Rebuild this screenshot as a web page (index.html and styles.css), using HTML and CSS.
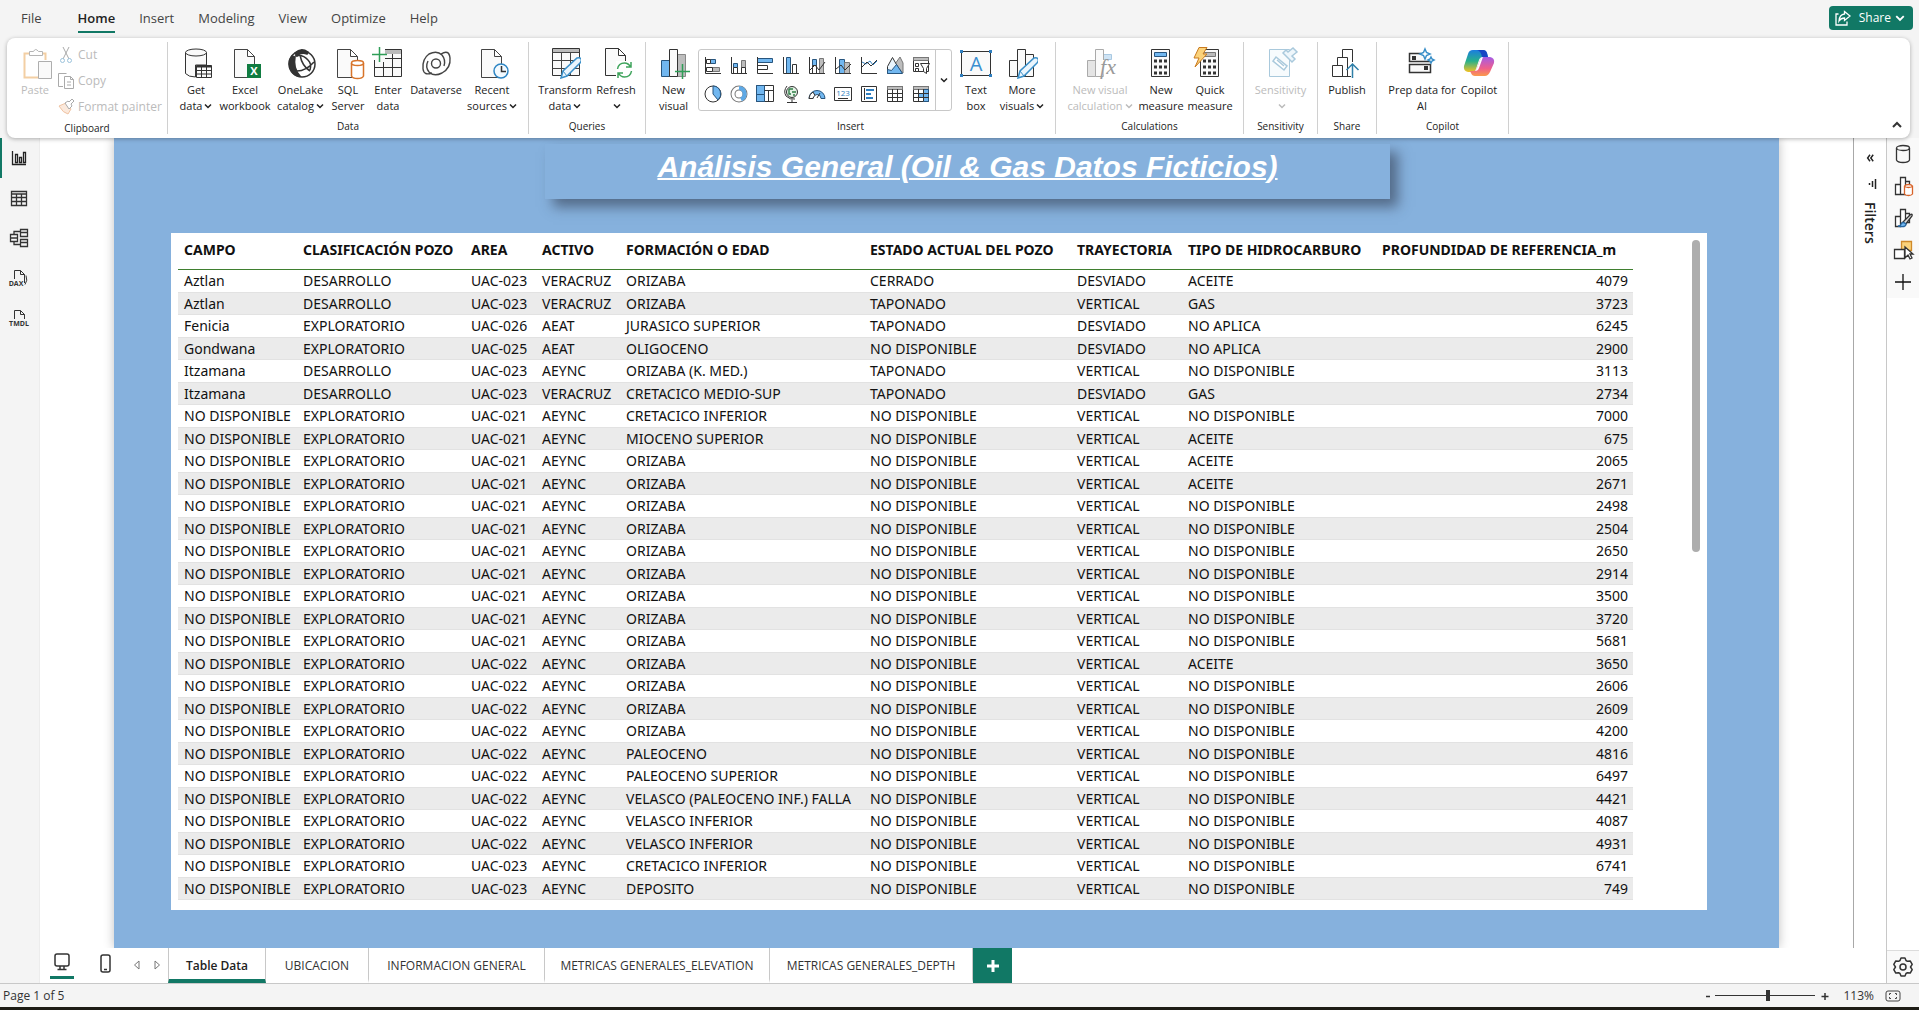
FILE: index.html
```html
<!DOCTYPE html>
<html lang="en">
<head>
<meta charset="utf-8">
<title>Report editor</title>
<link rel="stylesheet" href="styles.css">
</head>
<body>
<svg class="defs" aria-hidden="true">
  <symbol id="chev" viewBox="0 0 8 8"><path d="M1 2.500l3 3 3-3" fill="none" stroke="currentColor" stroke-width="1.500"/></symbol>
  <symbol id="doc" viewBox="0 0 32 32"><path d="M5.500 2.500h13l7 7v21h-20zM18.500 2.500v7h7" fill="#fafafa" stroke="#444"/></symbol>
  <symbol id="pencil" viewBox="0 0 32 32"><path d="M12 31l2-7 14-13q3-1 4 1t-1 4l-13 13z" fill="#eaf5fd" stroke="#3a8fc8" stroke-width="1.500"/><path d="M14 24l4 5" stroke="#3a8fc8"/></symbol>
</svg>

<header class="topbar">
  <nav class="menu">
    <a href="#">File</a><a href="#" class="active">Home</a><a href="#">Insert</a><a href="#">Modeling</a><a href="#">View</a><a href="#">Optimize</a><a href="#">Help</a>
  </nav>
  <button class="share"><svg width="16" height="16" viewBox="0 0 16 16" fill="none" stroke="#fff" stroke-width="1.300"><path d="M3.500 4H1v11h11v-3.500"/><path d="M9.500 1.500L15 6l-5.500 4.500V8Q6 8 4 11q.5-6.500 5.500-7z"/></svg>Share<svg width="10" height="10"><use href="#chev"/></svg></button>
</header>

<section class="ribbon">
  <div class="group clipboard">
    <div class="tools">
      <button class="tool" disabled><svg class="ico" viewBox="0 0 32 32" fill="none"><path d="M14 6.500H5.500v24H19M22 6.500h4.500V13" stroke="#f3cfa4" stroke-width="2"/><path d="M10.500 8.500v-4h4q2-4 5 0h4v4z" fill="#fff" stroke="#b5b5b5"/><path d="M19.500 14.500h13v17h-13z" fill="#fafafa" stroke="#aeaeae"/></svg><span>Paste</span></button>
      <div class="stack">
        <button disabled><svg width="18" height="18" viewBox="0 0 18 18" fill="none" stroke="#aaa"><path d="M6 1l6 12M12 1L6 13"/><circle cx="5.500" cy="14.500" r="2" stroke="#9cc3dc"/><circle cx="12.500" cy="14.500" r="2" stroke="#9cc3dc"/></svg>Cut</button>
        <button disabled><svg width="18" height="18" viewBox="0 0 18 18" fill="#fff" stroke="#aaa"><path d="M6 14.500H1.500v-13h8"/><path d="M7.500 4.500h6l3 3v9h-9zM13.500 4.500v3h3M10 10h4M10 13h4"/></svg>Copy</button>
        <button disabled><svg width="18" height="18" viewBox="0 0 18 18" fill="none" stroke="#aaa"><path d="M2 8l7-3 5 6-3 5q-5-1-9-8z" stroke="#f0c4a4" fill="#fbe9dc"/><path d="M8 5l3-2 1 1 3-3 2 2-3 3 1 2-3 3z" fill="#fff"/></svg>Format painter</button>
      </div>
    </div>
    <h2>Clipboard</h2>
  </div>

  <div class="group data">
    <div class="tools">
      <button class="tool"><svg class="ico" viewBox="0 0 32 32" fill="#fafafa" stroke="#333"><path d="M5.500 5.500v21q3 3.500 10 3.500V18h11V5.500"/><ellipse cx="16" cy="5.500" rx="10.500" ry="3.500"/><path d="M16.500 18.500h15v12h-15z"/><path d="M16.500 19.500h15" stroke-width="2"/><path d="M16.500 23.500h15M16.500 27h15M21.500 19v12M26.500 19v12"/></svg><span>Get<br>data<svg class="chev"><use href="#chev"/></svg></span></button>
      <button class="tool"><svg class="ico" viewBox="0 0 32 32"><use href="#doc"/><path d="M18 17h14v14H18z" fill="#107c41"/><text x="25" y="28" class="xl">X</text></svg><span>Excel<br>workbook</span></button>
      <button class="tool"><svg class="ico" viewBox="0 0 32 32" fill="none" stroke="#333" stroke-width="1.500"><circle cx="17" cy="17" r="13" fill="#fff"/><path d="M7 9q-6 8 1 17 3 3 7 3Q8 21 10 10z" fill="#333"/><path d="M10 6q6-6 13-1l-1 2q-6-2-10 2z" fill="#333"/><path d="M10 9q8-2 13 4 4 4 2 10M12 24q9 0 17-9M15 8q2 11 10 16"/></svg><span>OneLake<br>catalog<svg class="chev"><use href="#chev"/></svg></span></button>
      <button class="tool"><svg class="ico" viewBox="0 0 32 32"><use href="#doc"/><g fill="#fff" stroke="#d8742a" stroke-width="1.500"><path d="M19.500 16v13q1 2.500 6 2.500t6-2.500V16"/><ellipse cx="25.500" cy="16" rx="6" ry="2.500"/></g></svg><span>SQL<br>Server</span></button>
      <button class="tool"><svg class="ico" viewBox="0 0 32 32" fill="none" stroke="#333"><path d="M2.500 13v16.500h27v-27H13" fill="#fafafa"/><path d="M13 3h16v4H13z" fill="#bbb" stroke="none"/><path d="M2.500 20.500h27M13 11.500h16.500M11.500 15v14.500M20.500 7v22.500"/><path d="M7.500 0v15M0 7.500h15" stroke="#2f9e57" stroke-width="1.500"/></svg><span>Enter<br>data</span></button>
      <button class="tool"><svg class="ico" viewBox="0 0 32 32" fill="none" stroke="#444" stroke-width="1.400"><path d="M12 26Q4 29 3 22 2 12 9 7q8-4 13 1 4 5 2 11"/><path d="M21 7q8-5 9 4 1 10-8 15-8 4-13-1-4-5-1-11"/><circle cx="16" cy="16.500" r="4.500"/></svg><span>Dataverse</span></button>
      <button class="tool"><svg class="ico" viewBox="0 0 32 32"><use href="#doc"/><circle cx="25" cy="24" r="7" fill="#f3faff" stroke="#2f86c4" stroke-width="1.500"/><path d="M25.500 19v5.500H30" fill="none" stroke="#333" stroke-width="1.500"/></svg><span>Recent<br>sources<svg class="chev"><use href="#chev"/></svg></span></button>
    </div>
    <h2>Data</h2>
  </div>

  <div class="group queries">
    <div class="tools">
      <button class="tool"><svg class="ico" viewBox="0 0 32 32"><path d="M3.500 1.500h27v27h-27z" fill="#fafafa" stroke="#333"/><path d="M4 2h26v3H4z" fill="#bbb"/><path d="M3.500 5.500h27M3.500 13.500h27M3.500 21.500h27M12.500 5v23M21.500 5v23" stroke="#444" fill="none"/><use href="#pencil"/></svg><span>Transform<br>data<svg class="chev"><use href="#chev"/></svg></span></button>
      <button class="tool"><svg class="ico" viewBox="0 0 32 32"><path d="M5.500 1.500h13l7 7v20h-20zM18.500 1.500v7h7" fill="#fafafa" stroke="#333"/><path d="M16 14h16v17H16z" fill="#fff"/><path d="M17.500 22q1-6 7-6 4 0 6 4M31 15v5h-5M31.500 24q-1 6-7 6-4 0-6-4M18 31v-5h5" fill="none" stroke="#3fa45c" stroke-width="1.500"/></svg><span>Refresh<br><svg class="chev"><use href="#chev"/></svg></span></button>
    </div>
    <h2>Queries</h2>
  </div>

  <div class="group insert">
    <div class="tools">
      <button class="tool"><svg class="ico" viewBox="0 0 32 32"><path d="M3.500 13.500h8v16h-8z" fill="#71b7f0" stroke="#27557e"/><path d="M19.500 7.500h8v22h-8z" fill="#bdbdbd" stroke="#888"/><path d="M11.500 2.500h8v27h-8z" fill="#fafafa" stroke="#333"/><path d="M24.500 17v15M17 24.500h15" stroke="#2f9e57" stroke-width="1.500"/></svg><span>New<br>visual</span></button>
      <div class="gallery">
        <div class="visuals">
          <button aria-label="Stacked bar chart"><svg viewBox="0 0 18 18"><path class="b" d="M6.500 3.500h5v4h-5z"/><path class="w" d="M2.500 3.500h4v4h-4z"/><path class="g" d="M8.500 11.500h7v4h-7z"/><path class="w" d="M2.500 11.500h6v4h-6z"/><path class="l" d="M1.500 1v16.500H17"/></svg></button>
          <button aria-label="Stacked column chart"><svg viewBox="0 0 18 18"><path class="b" d="M3.500 7.500h4v4h-4z"/><path class="w" d="M3.500 11.500h4v6h-4z"/><path class="g" d="M11.500 4.500h4v7h-4z"/><path class="w" d="M11.500 11.500h4v6h-4z"/><path class="l" d="M1.500 1v16.500H17"/></svg></button>
          <button aria-label="Clustered bar chart"><svg viewBox="0 0 18 18"><path class="b" d="M1.500 2.500h15v4h-15z"/><path class="w" d="M1.500 9.500h10v4h-10z"/><path class="l" d="M1.500 1v16.500H17"/></svg></button>
          <button aria-label="Clustered column chart"><svg viewBox="0 0 18 18"><path class="b" d="M4.500 1.500h4v16h-4z"/><path class="w" d="M10.500 8.500h4v9h-4z"/><path class="l" d="M1.500 1v16.500H17"/></svg></button>
          <button aria-label="Line and stacked column chart"><svg viewBox="0 0 18 18"><path class="b" d="M4.500 3.500h4v6h-4z"/><path class="w" d="M4.500 9.500h4v8h-4z"/><path class="g" d="M11.500 2.500h4v15h-4z"/><path class="l" d="M1.500 1v16.500H17M2 14l5-5 4 5 6-8"/></svg></button>
          <button aria-label="Line and clustered column chart"><svg viewBox="0 0 18 18"><path class="b" d="M5.500 3.500h5v14h-5z"/><path class="g" d="M10.500 6.500h5v11h-5z"/><path class="l" d="M1.500 1v16.500H17M2 13l5-4 4 5 6-6"/></svg></button>
          <button aria-label="Line chart"><svg viewBox="0 0 18 18"><path d="M2 6l4 2 4-3 3 4 4-4" fill="none" stroke="#2f7fc0"/><path class="l" d="M1.500 1v16.500H17M2 11l5-5 4 4 6-6"/></svg></button>
          <button aria-label="Area chart"><svg viewBox="0 0 18 18"><path d="M9 8l5-7 3 6v10z" fill="#bdbdbd" stroke="#777"/><path d="M1.500 17.500v-7l5-9 9 16z" fill="#eaf5fd" stroke="#333"/><path d="M1.500 17.500v-4l4 1 5-6 6 9z" class="b"/></svg></button>
          <button aria-label="Slicer"><svg viewBox="0 0 18 18"><path class="w" d="M1.500 1.500h15v14h-15z"/><path class="g" d="M1.500 1.500h15v3h-15z"/><path class="w" d="M3.500 7.500h3v3h-3zM3.500 12.500h3v3h-3zM8.500 7.500h9l-3 5v5l-3-2v-3z"/></svg></button>
          <button aria-label="Pie chart"><svg viewBox="0 0 18 18"><circle class="w" cx="9" cy="9" r="8"/><path class="b" d="M9 1a8 8 0 0 1 5 14L9 9z"/></svg></button>
          <button aria-label="Donut chart"><svg viewBox="0 0 18 18"><circle cx="9" cy="9" r="6" fill="none" stroke="#777" stroke-width="5"/><circle cx="9" cy="9" r="6" fill="none" stroke="#fff" stroke-width="3"/><path d="M9 3a6 6 0 0 1 2 11.500" fill="none" stroke="#5ea9e6" stroke-width="4"/></svg></button>
          <button aria-label="Treemap"><svg viewBox="0 0 18 18"><path class="w" d="M.500 .500h17v16H.500z"/><path class="b" d="M.500 .500h8v9h-8zM.500 9.500h8v7h-8z"/><path class="l" d="M8.500 5.500h9M12.500 5.500v11"/></svg></button>
          <button aria-label="Map"><svg viewBox="0 0 18 18"><circle cx="10" cy="7" r="5.500" fill="#e4f2e6" stroke="#333"/><path d="M7 4h4M7 4v5h2M10 7h4M11 10h2" fill="none" stroke="#2e7d46" stroke-width="1.400"/><path class="l" d="M5 1Q1 6 4 11q4 4 9 3M10 14.500v3M5 17.500h10"/></svg></button>
          <button aria-label="Gauge"><svg viewBox="0 0 18 18"><path d="M1 13.500a8 8 0 0 1 16 0h-4a4 4 0 0 0-8 0z" fill="#71b7f0" stroke="#27557e"/><path d="M1 13.500A8 8 0 0 1 5 7l2 3.500a4 4 0 0 0-2 3z" fill="#fff" stroke="#333"/><path class="l" d="M9 13l3-5"/></svg></button>
          <button aria-label="Card"><svg viewBox="0 0 18 18"><path class="w" d="M.500 2.500h17v13H.500z"/><text x="9" y="11" class="num">123</text><path class="l" d="M4 13.500h10"/></svg></button>
          <button aria-label="Multi-row card"><svg viewBox="0 0 18 18"><path class="w" d="M1.500 1.500h15v15h-15z"/><path d="M4.500 3v12" stroke="#333"/><path d="M6 5h8M6 9h5M6 13h7" stroke="#2f7fc0" stroke-width="2"/></svg></button>
          <button aria-label="Table"><svg viewBox="0 0 18 18"><path class="w" d="M1.500 1.500h15v15h-15z"/><path class="g" d="M1.500 1.500h15v3h-15z"/><path class="l" d="M1 8.500h16M1 12.500h16M6.500 4v12M11.500 4v12"/></svg></button>
          <button aria-label="Matrix"><svg viewBox="0 0 18 18"><path class="w" d="M1.500 1.500h15v15h-15z"/><path class="g" d="M1.500 1.500h15v3h-15z"/><path class="b" d="M11.500 4.500h5v12h-5zM6.500 8.500h5v4h-5z"/><path class="l" d="M1 8.500h16M1 12.500h16M6.500 4v12M11.500 4v12"/></svg></button>
        </div>
        <button class="more" aria-label="More visuals"><svg class="chev"><use href="#chev"/></svg></button>
      </div>
      <button class="tool"><svg class="ico" viewBox="0 0 32 32"><path d="M1.500 4.500h29v24h-29z" fill="#fafafa" stroke="#333"/><path d="M0 3h3v3H0zM29 3h3v3h-3zM0 27h3v3H0zM29 27h3v3h-3z" fill="#2f7fc0"/><text x="16" y="24" class="big">A</text></svg><span>Text<br>box</span></button>
      <button class="tool"><svg class="ico" viewBox="0 0 32 32"><path d="M3.500 13.500h8v16h-8zM19.500 7.500h8v22h-8zM11.500 2.500h8v27h-8z" fill="#fafafa" stroke="#333"/><use href="#pencil"/></svg><span>More<br>visuals<svg class="chev"><use href="#chev"/></svg></span></button>
    </div>
    <h2>Insert</h2>
  </div>

  <div class="group calc">
    <div class="tools">
      <button class="tool" disabled><svg class="ico" viewBox="0 0 32 32"><path d="M3.500 13.500h8v16h-8z" fill="#e4e4e4" stroke="#aaa"/><path d="M19.500 7.500h8v5h-8z" fill="#cfe4f5" stroke="#a9c9e2"/><path d="M11.500 2.500h8v27h-8z" fill="#fafafa" stroke="#aaa"/><path d="M18 13h14v18H20z" fill="#fff"/><text x="24" y="27" class="fx">fx</text></svg><span>New visual<br>calculation<svg class="chev"><use href="#chev"/></svg></span></button>
      <button class="tool"><svg class="ico" viewBox="0 0 32 32"><path d="M6.500 2.500h18v27h-18z" fill="#fafafa" stroke="#333"/><path d="M9.500 5.500h12v4h-12z" fill="#71b7f0" stroke="#27557e"/><path d="M9 14h14M9 20h14M9 26h14" stroke="#333" stroke-width="3" stroke-dasharray="3 2"/></svg><span>New<br>measure</span></button>
      <button class="tool"><svg class="ico" viewBox="0 0 32 32"><path d="M6.500 2.500h18v27h-18z" fill="#fafafa" stroke="#333"/><path d="M9.500 5.500h12v4h-12z" fill="#bbb" stroke="#777"/><path d="M9 14h14M9 20h14M9 26h14" stroke="#333" stroke-width="3" stroke-dasharray="3 2"/><path d="M5 .500h8L9 7h4L1 20l4-9H0z" fill="#fbd27a" stroke="#c97a1e"/></svg><span>Quick<br>measure</span></button>
    </div>
    <h2>Calculations</h2>
  </div>

  <div class="group sens">
    <div class="tools">
      <button class="tool" disabled><svg class="ico" viewBox="0 0 32 32" stroke="#a9c9dc"><path d="M4.500 2.500h20v27h-20z" fill="#f7fbfd"/><path d="M11 10l11 9-3 4-11-9zM12 13l7 6" fill="#fff" stroke-width="1.500"/><path d="M18 6l9 9 3-3-3-3 5-4-4-4-5 4-2-2z" fill="#eef6fb" stroke-width="1.500"/></svg><span>Sensitivity<br><svg class="chev"><use href="#chev"/></svg></span></button>
    </div>
    <h2>Sensitivity</h2>
  </div>

  <div class="group pub">
    <div class="tools">
      <button class="tool"><svg class="ico" viewBox="0 0 32 32" fill="#fff" stroke="#333"><path d="M11.500 29.500v-27h10v27z"/><path d="M6.500 29.500v-19h10v19z"/><path d="M1.500 18.500h10v11h-10z"/><path d="M11.500 29.500H20" /><path d="M17 15h10v17h-7V17z" stroke="none"/><path d="M21.500 31V17M15.500 23l6-6 6 6" fill="none" stroke="#2f7fa8" stroke-width="1.500"/></svg><span>Publish</span></button>
    </div>
    <h2>Share</h2>
  </div>

  <div class="group copilot">
    <div class="tools">
      <button class="tool"><svg class="ico" viewBox="0 0 32 32"><path d="M15 6.500H3.500v8h21M3.500 17.500h21v8h-21z" fill="#fafafa" stroke="#333" stroke-width="1.500"/><path d="M6 9h4v4H6zM18 19h4v4h-4z" fill="#333"/><path d="M19 2l1.500 3.500L24 7l-3.500 1.500L19 12l-1.500-3.500L14 7l3.500-1.500zM25 10l1 2 2 1-2 1-1 2-1-2-2-1 2-1z" fill="#fff" stroke="#3a8fc8" stroke-width="1.500"/></svg><span>Prep data for<br>AI</span></button>
      <button class="tool"><svg class="ico" viewBox="0 0 32 32"><defs><linearGradient id="ca" x1="0" y1="0" x2="0" y2="1"><stop offset="0" stop-color="#1b7de0"/><stop offset=".5" stop-color="#27b08c"/><stop offset="1" stop-color="#f3c222"/></linearGradient><linearGradient id="cb" x1="0" y1="0" x2="0" y2="1"><stop offset="0" stop-color="#a45be6"/><stop offset=".6" stop-color="#ef5f8c"/><stop offset="1" stop-color="#fb9a4b"/></linearGradient></defs><path d="M10 3h10q3 0 4 3l1 4h-5q-3 0-4 3l-3 9q-1 3-4 3H5q-5-1-4-6l4-12q1-4 5-4z" fill="url(#ca)"/><path d="M14 3h6q3 0 4 3l1 4h-6q-1-6-5-7z" fill="#1746c4"/><path d="M22 29H12q-3 0-4-3l-1-2h3q3 0 4-3l3-8q1-3 4-3h6q5 1 4 6l-4 9q-2 4-5 4z" fill="url(#cb)"/><path d="M14 21l3-8q1-3 3-3l-4 11q-1 3-4 3 1-1 2-3z" fill="#fff"/></svg><span>Copilot</span></button>
    </div>
    <h2>Copilot</h2>
  </div>
  <button class="collapse" aria-label="Collapse ribbon"><svg width="10" height="10" viewBox="0 0 10 10"><path d="M1 7l4-4 4 4" fill="none" stroke="#333" stroke-width="2"/></svg></button>
</section>

<main class="workspace">
  <nav class="rail views">
    <button class="on" aria-label="Report view"><svg viewBox="0 0 20 20" fill="none" stroke="#222" stroke-width="1.300"><path d="M3.500 3v13.500H17M6.500 6.500h2v8h-2zM10.500 9.500h2v5h-2zM14.500 4.500h2v10h-2z"/></svg></button>
    <button aria-label="Table view"><svg viewBox="0 0 20 20" fill="none" stroke="#333" stroke-width="1.300"><path d="M2.500 3.500h15v14h-15zM2.500 6h15M2.500 9.500h15M2.500 13.500h15M7.500 6v11M12.500 6v11"/></svg></button>
    <button aria-label="Model view"><svg viewBox="0 0 20 20" fill="none" stroke="#333" stroke-width="1.300"><path d="M1.500 6.500h7v7h-7zM1.500 10h7M11.500 1.500h7v7h-7zM11.500 4.500h7M11.500 11.500h7v7h-7zM11.500 14.500h7M5 6V3.500h6M5 14v2.500h6"/></svg></button>
    <button aria-label="DAX query view"><svg viewBox="0 0 20 20" fill="none" stroke="#333"><path d="M5.500 11V2.500h6l4 4V15M11.500 2.500v4h4M17 7.500q2 5-1 9"/><text x="7" y="18" class="tiny">DAX</text></svg></button>
    <button aria-label="TMDL view"><svg viewBox="0 0 20 20" fill="none" stroke="#333"><path d="M5.500 11V2.500h6l4 4V11M11.500 2.500v4h4"/><text x="10" y="18" class="tiny">TMDL</text></svg></button>
  </nav>

  <div class="center">
    <div class="stage">
      <div class="canvas">
        <article class="page">
          <h1>Análisis General (Oil &amp; Gas Datos Ficticios)</h1>
          <div class="card">
            <table>
              <colgroup><col class="c1"><col class="c2"><col class="c3"><col class="c4"><col class="c5"><col class="c6"><col class="c7"><col class="c8"><col class="c9"></colgroup>
              <thead><tr><th>CAMPO<th>CLASIFICACIÓN POZO<th>AREA<th>ACTIVO<th>FORMACIÓN O EDAD<th>ESTADO ACTUAL DEL POZO<th>TRAYECTORIA<th>TIPO DE HIDROCARBURO<th>PROFUNDIDAD DE REFERENCIA_m</tr></thead>
              <tbody>
              <tr><td>Aztlan<td>DESARROLLO<td>UAC-023<td>VERACRUZ<td>ORIZABA<td>CERRADO<td>DESVIADO<td>ACEITE<td>4079
              <tr><td>Aztlan<td>DESARROLLO<td>UAC-023<td>VERACRUZ<td>ORIZABA<td>TAPONADO<td>VERTICAL<td>GAS<td>3723
              <tr><td>Fenicia<td>EXPLORATORIO<td>UAC-026<td>AEAT<td>JURASICO SUPERIOR<td>TAPONADO<td>DESVIADO<td>NO APLICA<td>6245
              <tr><td>Gondwana<td>EXPLORATORIO<td>UAC-025<td>AEAT<td>OLIGOCENO<td>NO DISPONIBLE<td>DESVIADO<td>NO APLICA<td>2900
              <tr><td>Itzamana<td>DESARROLLO<td>UAC-023<td>AEYNC<td>ORIZABA (K. MED.)<td>TAPONADO<td>VERTICAL<td>NO DISPONIBLE<td>3113
              <tr><td>Itzamana<td>DESARROLLO<td>UAC-023<td>VERACRUZ<td>CRETACICO MEDIO-SUP<td>TAPONADO<td>DESVIADO<td>GAS<td>2734
              <tr><td>NO DISPONIBLE<td>EXPLORATORIO<td>UAC-021<td>AEYNC<td>CRETACICO INFERIOR<td>NO DISPONIBLE<td>VERTICAL<td>NO DISPONIBLE<td>7000
              <tr><td>NO DISPONIBLE<td>EXPLORATORIO<td>UAC-021<td>AEYNC<td>MIOCENO SUPERIOR<td>NO DISPONIBLE<td>VERTICAL<td>ACEITE<td>675
              <tr><td>NO DISPONIBLE<td>EXPLORATORIO<td>UAC-021<td>AEYNC<td>ORIZABA<td>NO DISPONIBLE<td>VERTICAL<td>ACEITE<td>2065
              <tr><td>NO DISPONIBLE<td>EXPLORATORIO<td>UAC-021<td>AEYNC<td>ORIZABA<td>NO DISPONIBLE<td>VERTICAL<td>ACEITE<td>2671
              <tr><td>NO DISPONIBLE<td>EXPLORATORIO<td>UAC-021<td>AEYNC<td>ORIZABA<td>NO DISPONIBLE<td>VERTICAL<td>NO DISPONIBLE<td>2498
              <tr><td>NO DISPONIBLE<td>EXPLORATORIO<td>UAC-021<td>AEYNC<td>ORIZABA<td>NO DISPONIBLE<td>VERTICAL<td>NO DISPONIBLE<td>2504
              <tr><td>NO DISPONIBLE<td>EXPLORATORIO<td>UAC-021<td>AEYNC<td>ORIZABA<td>NO DISPONIBLE<td>VERTICAL<td>NO DISPONIBLE<td>2650
              <tr><td>NO DISPONIBLE<td>EXPLORATORIO<td>UAC-021<td>AEYNC<td>ORIZABA<td>NO DISPONIBLE<td>VERTICAL<td>NO DISPONIBLE<td>2914
              <tr><td>NO DISPONIBLE<td>EXPLORATORIO<td>UAC-021<td>AEYNC<td>ORIZABA<td>NO DISPONIBLE<td>VERTICAL<td>NO DISPONIBLE<td>3500
              <tr><td>NO DISPONIBLE<td>EXPLORATORIO<td>UAC-021<td>AEYNC<td>ORIZABA<td>NO DISPONIBLE<td>VERTICAL<td>NO DISPONIBLE<td>3720
              <tr><td>NO DISPONIBLE<td>EXPLORATORIO<td>UAC-021<td>AEYNC<td>ORIZABA<td>NO DISPONIBLE<td>VERTICAL<td>NO DISPONIBLE<td>5681
              <tr><td>NO DISPONIBLE<td>EXPLORATORIO<td>UAC-022<td>AEYNC<td>ORIZABA<td>NO DISPONIBLE<td>VERTICAL<td>ACEITE<td>3650
              <tr><td>NO DISPONIBLE<td>EXPLORATORIO<td>UAC-022<td>AEYNC<td>ORIZABA<td>NO DISPONIBLE<td>VERTICAL<td>NO DISPONIBLE<td>2606
              <tr><td>NO DISPONIBLE<td>EXPLORATORIO<td>UAC-022<td>AEYNC<td>ORIZABA<td>NO DISPONIBLE<td>VERTICAL<td>NO DISPONIBLE<td>2609
              <tr><td>NO DISPONIBLE<td>EXPLORATORIO<td>UAC-022<td>AEYNC<td>ORIZABA<td>NO DISPONIBLE<td>VERTICAL<td>NO DISPONIBLE<td>4200
              <tr><td>NO DISPONIBLE<td>EXPLORATORIO<td>UAC-022<td>AEYNC<td>PALEOCENO<td>NO DISPONIBLE<td>VERTICAL<td>NO DISPONIBLE<td>4816
              <tr><td>NO DISPONIBLE<td>EXPLORATORIO<td>UAC-022<td>AEYNC<td>PALEOCENO SUPERIOR<td>NO DISPONIBLE<td>VERTICAL<td>NO DISPONIBLE<td>6497
              <tr><td>NO DISPONIBLE<td>EXPLORATORIO<td>UAC-022<td>AEYNC<td>VELASCO (PALEOCENO INF.) FALLA<td>NO DISPONIBLE<td>VERTICAL<td>NO DISPONIBLE<td>4421
              <tr><td>NO DISPONIBLE<td>EXPLORATORIO<td>UAC-022<td>AEYNC<td>VELASCO INFERIOR<td>NO DISPONIBLE<td>VERTICAL<td>NO DISPONIBLE<td>4087
              <tr><td>NO DISPONIBLE<td>EXPLORATORIO<td>UAC-022<td>AEYNC<td>VELASCO INFERIOR<td>NO DISPONIBLE<td>VERTICAL<td>NO DISPONIBLE<td>4931
              <tr><td>NO DISPONIBLE<td>EXPLORATORIO<td>UAC-023<td>AEYNC<td>CRETACICO INFERIOR<td>NO DISPONIBLE<td>VERTICAL<td>NO DISPONIBLE<td>6741
              <tr><td>NO DISPONIBLE<td>EXPLORATORIO<td>UAC-023<td>AEYNC<td>DEPOSITO<td>NO DISPONIBLE<td>VERTICAL<td>NO DISPONIBLE<td>749
              </tbody>
            </table>
            <div class="scroll"><div class="thumb"></div></div>
          </div>
        </article>
      </div>
      <aside class="filters">
        <button aria-label="Expand filters"><svg width="8" height="8" viewBox="0 0 10 10" fill="none" stroke="#222" stroke-width="1.800"><path d="M5 1L2 5l3 4M9 1L6 5l3 4"/></svg></button>
        <svg class="funnel" width="10" height="10" viewBox="0 0 10 10" stroke="#222"><path d="M8.500 0v10M5.500 2v6M2.500 4v2" stroke-width="1.500"/></svg>
        <h2>Filters</h2>
      </aside>
    </div>
    <footer class="pages">
      <div class="device">
        <button class="on" aria-label="Desktop layout"><svg width="18" height="18" viewBox="0 0 18 18" fill="none" stroke="#333" stroke-width="1.500"><rect x="2" y="1" width="14" height="12" rx="2"/><path d="M7 13v3M11 13v3M4.500 16.500h9"/></svg></button>
        <button aria-label="Mobile layout"><svg width="12" height="20" viewBox="0 0 12 20" fill="none" stroke="#333" stroke-width="1.500"><rect x="1" y="1" width="9" height="17" rx="2"/><path d="M4 15.500h3"/></svg></button>
      </div>
      <div class="arrows">
        <button aria-label="Previous page"><svg width="8" height="10" viewBox="0 0 8 10" fill="none" stroke="#777"><path d="M6 1v8L1.500 5z"/></svg></button>
        <button aria-label="Next page"><svg width="8" height="10" viewBox="0 0 8 10" fill="none" stroke="#777"><path d="M2 1v8l4.500-4z"/></svg></button>
      </div>
      <button class="tab t1 on">Table Data</button>
      <button class="tab t2">UBICACION</button>
      <button class="tab t3">INFORMACION GENERAL</button>
      <button class="tab t4">METRICAS GENERALES_ELEVATION</button>
      <button class="tab t5">METRICAS GENERALES_DEPTH</button>
      <button class="add" aria-label="New page"><svg width="12" height="12" viewBox="0 0 12 12"><path d="M6 0v12M0 6h12" stroke="#fff" stroke-width="3"/></svg></button>
    </footer>
  </div>

  <nav class="rail panes">
    <div class="panelist">
      <button aria-label="Data"><svg viewBox="0 0 20 20" fill="none" stroke="#333" stroke-width="1.300"><ellipse cx="10" cy="4" rx="6.500" ry="2.500"/><path d="M3.500 4v12q1 2.500 6.500 2.500t6.500-2.500V4"/></svg></button>
      <button aria-label="Build visual"><svg viewBox="0 0 20 20" fill="#fff" stroke="#333" stroke-width="1.300"><path d="M2.500 8.500h5v10h-5zM12.500 5.500h4v13h-4zM7.500 1.500h5v17h-5z"/><path d="M11.500 10v8q1 1.500 4 1.500t4-1.500v-8q-1-1.500-4-1.500t-4 1.500q1 1.500 4 1.500t4-1.500" stroke="#d8642a" fill="#fff"/></svg></button>
      <button aria-label="Format visual"><svg viewBox="0 0 20 20" fill="#fff" stroke="#333" stroke-width="1.300"><path d="M2.500 8.500h5v10h-5zM12.500 5.500h4v9h-4zM7.500 1.500h5v15h-5z"/><path d="M9 15l8-8q3-2 2 1l-7 9z" fill="#ddd"/><path d="M5 18q3 0 3-2 2-3 5 0 0 4-8 2z" fill="#71b7f0" stroke="#27659e"/></svg></button>
      <button aria-label="Selection"><svg viewBox="0 0 20 20" stroke="#333" stroke-width="1.300"><path d="M8.500 1.500h10v9h-10z" fill="#fbd27a" stroke="#d08a2a"/><path d="M1.500 9.500h10v9h-10z" fill="#fff"/><path d="M12 7v11l3-3 2 4 2-1-2-4h3z" fill="#fff"/></svg></button>
      <button aria-label="Add pane"><svg viewBox="0 0 20 20"><path d="M10 2v16M2 10h16" stroke="#111" stroke-width="1.300"/></svg></button>
    </div>
    <button class="gear" aria-label="Settings"><svg viewBox="0 0 20 20" fill="none" stroke="#333" stroke-width="1.500" stroke-linejoin="round"><circle cx="10" cy="10" r="3"/><path d="M7 3.500l1-2.500h4l1 2.500 1.500.8 2.700-.4 2 3.500L17.500 10l1.700 2.600-2 3.500-2.700-.4-1.500.8-1 2.500H8l-1-2.500-1.500-.8-2.700.4-2-3.500L2.500 10 .8 7.400l2-3.500 2.700.4z"/></svg></button>
  </nav>
</main>

<div class="status">
  <span>Page 1 of 5</span>
  <div class="zoom">
    <button aria-label="Zoom out"><svg width="6" height="10" viewBox="0 0 6 10"><path d="M1 5.500h4" stroke="#333" stroke-width="1.500"/></svg></button>
    <input type="range" min="0" max="100" value="53" aria-label="Zoom">
    <button aria-label="Zoom in"><svg width="8" height="10" viewBox="0 0 8 10"><path d="M4 2v7M.500 5.500h7" stroke="#333" stroke-width="1.500"/></svg></button>
    <span>113%</span>
    <button class="fit" aria-label="Fit to page"><svg width="16" height="12" viewBox="0 0 16 12" fill="none" stroke="#444"><rect x="1" y="1" width="14" height="10" rx="2"/><path d="M4.500 5V3.500H6M11.500 5V3.500H10M4.500 7v1.500H6M11.500 7v1.500H10"/></svg></button>
  </div>
</div>
</body>
</html>
```

FILE: styles.css
```css
* { box-sizing: border-box; }
body {
  margin: 0;
  min-height: 100vh;
  display: flex;
  flex-direction: column;
  background: #f4f4f4;
  color: #222;
  font: 12px/16px "Open Sans", "Noto Sans", sans-serif;
}
button { font: inherit; color: inherit; background: none; border: 0; padding: 0; margin: 0; }
h1, h2 { margin: 0; }
.defs { position: absolute; width: 0; height: 0; }

/* Top menu */
.topbar { height: 38px; display: flex; justify-content: space-between; align-items: center; padding: 0 6px 2px 21px; }
.menu { display: flex; gap: 24px; font-size: 13px; line-height: 20px; }
.menu a { color: #444; text-decoration: none; padding: 5px 0 3px; border-bottom: 2px solid transparent; }
.menu a:first-child { margin-right: 12px; }
.menu .active { color: #222; font-weight: 600; border-color: #117865; }
.share { display: flex; align-items: center; gap: 8px; height: 24px; padding: 0 8px 0 6px; border-radius: 4px; background: #117865; color: #fff; }
.share svg:last-child { margin-left: -4px; }

/* Ribbon */
.ribbon { position: relative; z-index: 1; height: 100px; margin: 0 9px 0 7px; display: flex; background: #fff; border-radius: 8px; box-shadow: 0 1px 4px rgba(0, 0, 0, .3); padding: 4px 0; font-size: 11px; }
.group { border-right: 1px solid #d0d0d0; display: flex; flex-direction: column; justify-content: space-between; }
.group h2 { font-size: 10px; font-weight: 400; line-height: 16px; text-align: center; }
.tools { display: grid; }
.clipboard { width: 161px; }
.data { width: 361px; }
.queries { width: 117px; }
.insert { width: 410px; }
.calc { width: 188px; }
.sens { width: 74px; }
.pub { width: 59px; }
.copilot { width: 132px; }
.clipboard .tools { grid-template-columns: 42px 1fr; padding-left: 7px; }
.data .tools { grid-template-columns: 48px 50px 61px 34px 46px 50px 62px; padding-left: 4px; }
.queries .tools { grid-template-columns: 60px 42px; padding-left: 6px; }
.insert .tools { grid-template-columns: 49px 254px 48px 44px; padding-left: 3px; }
.calc .tools { grid-template-columns: 72px 50px 48px; padding-left: 8px; }
.copilot .tools { grid-template-columns: 72px 42px; padding-left: 9px; }
.tool { display: flex; flex-direction: column; align-items: center; padding-top: 5px; white-space: nowrap; gap: 3px; }
.tool span { text-align: center; display: block; margin: 0 -10px; }
.ico { width: 32px; height: 32px; overflow: visible; }
.chev { width: 8px; height: 8px; margin-left: 2px; }
.ribbon button:disabled { color: #bbb; }
.stack { display: flex; flex-direction: column; padding-left: 1px; }
.stack button { display: flex; align-items: center; gap: 3px; height: 26px; }
.stack button { font-size: 12px; }
.xl { font: 700 11px "Open Sans", sans-serif; fill: #fff; text-anchor: middle; }
.big { font: 20px "Open Sans", sans-serif; fill: #3a8fd0; text-anchor: middle; }
.num { font: 8px "Open Sans", sans-serif; fill: #2f7fc0; text-anchor: middle; }
.fx { font: italic 22px "Liberation Serif", serif; fill: #999; text-anchor: middle; }
.tiny { font: 700 7px "Open Sans", sans-serif; fill: #333; stroke: none; text-anchor: middle; }
.gallery { display: flex; height: 62px; margin-top: 7px; border: 1px solid #c8c8c8; border-radius: 3px; }
.visuals { display: grid; grid-template-columns: repeat(9, 26px); grid-auto-rows: 29px; align-content: start; padding: 0 1px; }
.visuals button { display: grid; place-items: center; }
.visuals svg { width: 18px; height: 18px; }
.more { flex: 1; border-left: 1px solid #c8c8c8; display: grid; place-items: center; }
.more .chev { margin: 0; }
.b { fill: #71b7f0; stroke: #27557e; }
.g { fill: #bdbdbd; stroke: #777; }
.w { fill: #fff; stroke: #333; }
.l { fill: none; stroke: #333; }
.collapse { margin: auto 8px 2px auto; height: 14px; }

/* Workspace */
.workspace { flex: 1; display: flex; background: #fff; }
.rail { display: flex; flex-direction: column; flex: none; }
.rail button { display: grid; place-items: center; }
.rail svg { width: 20px; height: 20px; overflow: visible; }
.views { width: 40px; background: #f4f4f4; border-right: 1px solid #ececec; }
.views button { height: 40px; border: 0 solid transparent; border-width: 0 3px 0 2px; }
.views .on { border-left-color: #117865; }
.center { flex: 1; min-width: 0; display: flex; flex-direction: column; }
.stage { flex: 1; display: flex; }
.canvas { flex: 1; padding: 0 74px; display: flex; overflow: hidden; }
.page { flex: 1; background: #86b1dd; padding: 6px 72px 38px 57px; display: flex; flex-direction: column; box-shadow: 0 0 10px rgba(0, 0, 0, .25); }
.page h1 {
  margin: 0 317px 34px 374px;
  height: 55px;
  text-align: center;
  font: italic 700 30px/46px "Liberation Sans", sans-serif;
  color: #fff;
  text-decoration: underline;
  text-decoration-thickness: 2px;
  background: #86b1dd;
  box-shadow: 8px 8px 12px rgba(50, 60, 80, .6);
  white-space: nowrap;
}
.card { flex: 1; background: #fff; padding: 7px 7px 10px 7px; display: flex; justify-content: space-between; }
table { table-layout: fixed; border-spacing: 0; width: 1455px; font-family: "Noto Sans", "Open Sans", sans-serif; font-size: 14px; color: #111; align-self: flex-start; }
.c1 { width: 119px; } .c2 { width: 168px; } .c3 { width: 71px; } .c4 { width: 84px; } .c5 { width: 244px; }
.c6 { width: 207px; } .c7 { width: 111px; } .c8 { width: 194px; } .c9 { width: 257px; }
th, td { text-align: left; padding: 0 0 0 6px; white-space: nowrap; line-height: 20px; }
th { height: 30px; padding-bottom: 9px; border-bottom: 1px solid #3f7f2f; font-weight: 700; }
td { height: 22px; }
tbody tr:nth-child(even) { background: #ebebeb; }
tbody tr:nth-child(even) td { height: 23px; border-top: 1px solid #e2e2e2; border-bottom: 1px solid #e2e2e2; }
td:last-child { text-align: right; padding-right: 5px; }
.scroll { width: 8px; }
.thumb { height: 312px; border-radius: 4px; background: #adadad; }
.filters { width: 33px; border-left: 1px solid #a8a8a8; display: flex; flex-direction: column; align-items: center; padding-top: 12px; gap: 17px; }
.filters button { height: 12px; }
.filters .funnel { margin-left: 4px; }
.filters h2 { writing-mode: vertical-rl; font-size: 14px; line-height: 18px; font-weight: 600; margin-top: -4px; }

/* Page tabs */
.pages { height: 35px; display: flex; }
.device { display: flex; width: 88px; padding-left: 10px; gap: 20px; }
.device button { width: 24px; height: 31px; display: grid; place-items: center; }
.device .on { border-bottom: 3px solid #117865; }
.arrows { display: flex; gap: 12px; align-items: center; width: 40px; padding-left: 5px; }
.tab { border-right: 1px solid #c8c8c8; border-bottom: 4px solid transparent; padding-top: 5px; color: #333; white-space: nowrap; }
.tab.on { border-left: 1px solid #c8c8c8; border-bottom-color: #117865; font-weight: 600; color: #222; }
.t1 { width: 98px; } .t2 { width: 103px; } .t3 { width: 176px; } .t4 { width: 225px; } .t5 { width: 203px; }
.add { width: 39px; background: #117865; display: grid; place-items: center; }
.panes { width: 33px; border-left: 1px solid #c8c8c8; justify-content: space-between; }
.panelist { background: #f9f9f9; }
.panelist button { width: 32px; height: 32px; }
.gear { height: 33px; background: #f9f9f9; border-top: 1px solid #dcdcdc; }

/* Status bar */
.status { height: 27px; border-top: 1px solid #c8c8c8; border-bottom: 3px solid #1d1c15; display: flex; justify-content: space-between; align-items: center; padding: 0 18px 0 3px; color: #333; }
.zoom { display: flex; align-items: center; gap: 4px; }
.zoom button { display: grid; }
.zoom span { margin-left: 10px; }
.zoom .fit { margin-left: 7px; }
input[type=range] { appearance: none; width: 100px; height: 12px; margin: 0 2px 0 0; background: linear-gradient(#333, #333) center / 100% 1px no-repeat; }
input[type=range]::-webkit-slider-thumb { appearance: none; width: 4px; height: 11px; background: #333; }
```
